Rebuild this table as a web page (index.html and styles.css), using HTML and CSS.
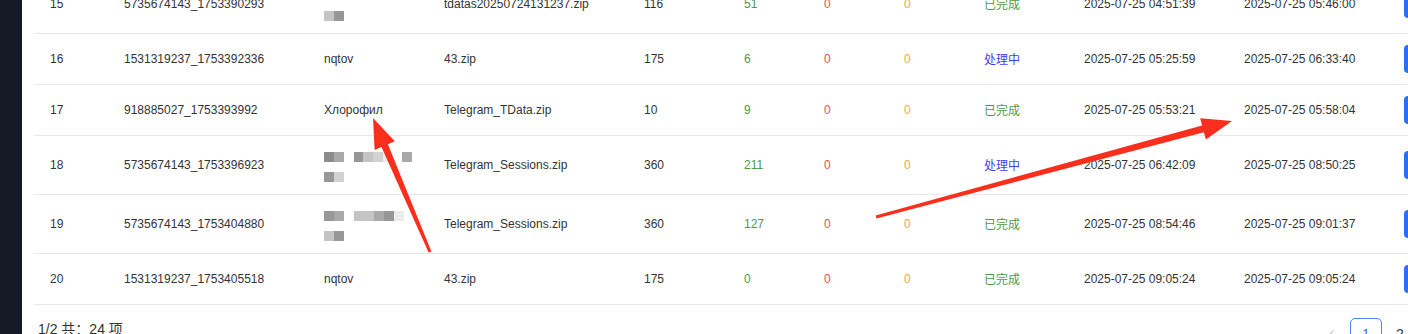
FILE: index.html
```html
<!DOCTYPE html>
<html lang="zh-CN">
<head>
<meta charset="utf-8">
<title>任务列表</title>
<link rel="stylesheet" href="styles.css">
</head>
<body>
<div class="page">
  <aside class="sidebar"></aside>
  <main class="main">
    <table class="grid">
      <colgroup>
        <col class="c-no"><col class="c-id"><col class="c-name"><col class="c-file"><col class="c-total">
        <col class="c-n"><col class="c-n"><col class="c-n"><col class="c-status"><col class="c-time"><col class="c-time"><col class="c-act">
      </colgroup>
      <tbody>
        <tr>
          <td>15</td><td>5735674143_1753390293</td>
          <td><div class="mosaic"><div class="mline"><span class="sq"></span></div><div class="mline"><span class="sq s3"></span><span class="sq s6"></span></div></div></td>
          <td>tdatas20250724131237.zip</td><td>116</td>
          <td class="ok">51</td><td class="bad">0</td><td class="warn">0</td>
          <td class="done">已完成</td><td>2025-07-25 04:51:39</td><td>2025-07-25 05:46:00</td>
          <td class="act"><button class="btn">查看详情</button></td>
        </tr>
        <tr>
          <td>16</td><td>1531319237_1753392336</td><td>nqtov</td><td>43.zip</td><td>175</td>
          <td class="ok">6</td><td class="bad">0</td><td class="warn">0</td>
          <td class="busy">处理中</td><td>2025-07-25 05:25:59</td><td>2025-07-25 06:33:40</td>
          <td class="act"><button class="btn">查看详情</button></td>
        </tr>
        <tr>
          <td>17</td><td>918885027_1753393992</td><td>Хлорофил</td><td>Telegram_TData.zip</td><td>10</td>
          <td class="ok">9</td><td class="bad">0</td><td class="warn">0</td>
          <td class="done">已完成</td><td>2025-07-25 05:53:21</td><td>2025-07-25 05:58:04</td>
          <td class="act"><button class="btn">查看详情</button></td>
        </tr>
        <tr>
          <td>18</td><td>5735674143_1753396923</td>
          <td><div class="mosaic">
            <div class="mline"><span class="sq s7"></span><span class="sq s5"></span><span class="sq s6"></span><span class="sq s3"></span><span class="sq s2"></span><span class="sq s1"></span><span class="sq s0"></span><span class="sq s5"></span></div>
            <div class="mline"><span class="sq s6"></span><span class="sq s2"></span></div>
          </div></td>
          <td>Telegram_Sessions.zip</td><td>360</td>
          <td class="ok">211</td><td class="bad">0</td><td class="warn">0</td>
          <td class="busy">处理中</td><td>2025-07-25 06:42:09</td><td>2025-07-25 08:50:25</td>
          <td class="act"><button class="btn">查看详情</button></td>
        </tr>
        <tr>
          <td>19</td><td>5735674143_1753404880</td>
          <td><div class="mosaic">
            <div class="mline"><span class="sq s6"></span><span class="sq s5"></span><span class="sq s3"></span><span class="sq s3"></span><span class="sq s5"></span><span class="sq s6"></span><span class="sq s1"></span></div>
            <div class="mline"><span class="sq s3"></span><span class="sq s6"></span></div>
          </div></td>
          <td>Telegram_Sessions.zip</td><td>360</td>
          <td class="ok">127</td><td class="bad">0</td><td class="warn">0</td>
          <td class="done">已完成</td><td>2025-07-25 08:54:46</td><td>2025-07-25 09:01:37</td>
          <td class="act"><button class="btn">查看详情</button></td>
        </tr>
        <tr>
          <td>20</td><td>1531319237_1753405518</td><td>nqtov</td><td>43.zip</td><td>175</td>
          <td class="ok">0</td><td class="bad">0</td><td class="warn">0</td>
          <td class="done">已完成</td><td>2025-07-25 09:05:24</td><td>2025-07-25 09:05:24</td>
          <td class="act"><button class="btn">查看详情</button></td>
        </tr>
      </tbody>
    </table>
    <div class="footer">
      <span class="total">1/2 共：24 项</span>
      <div class="pager">
        <span class="pg prev"><svg width="10" height="10" viewBox="0 0 10 10"><path d="M6.5 1.5 3 5l3.5 3.5" fill="none" stroke="#c8cbd2" stroke-width="1.2"/></svg></span>
        <span class="pg active">1</span>
        <span class="pg">2</span>
        <span class="pg next"><svg width="10" height="10" viewBox="0 0 10 10"><path d="M3.5 1.5 7 5 3.5 8.5" fill="none" stroke="#666" stroke-width="1.2"/></svg></span>
      </div>
    </div>
  </main>
  <svg class="marks" width="1408" height="334" viewBox="0 0 1408 334">
    <polygon points="373,118 394.8,141.3 387.9,144.2 431.4,251.4 428.6,252.6 381.5,147 374.6,149.9"/>
    <polygon points="1232,121 1200.2,118.2 1202.1,125.4 875.6,215.6 876.4,218.4 1203.9,132.2 1205.9,139.4"/>
  </svg>
</div>
</body>
</html>
```
FILE: styles.css
```css
* { box-sizing: border-box; }
html, body { margin: 0; padding: 0; background: #fff; }
body {
  width: 1408px;
  height: 334px;
  overflow: hidden;
  font-family: "Liberation Sans", Arial, "Noto Sans CJK SC", sans-serif;
  font-size: 12px;
  color: #333;
}
.page {
  position: relative;
  display: flex;
  height: 334px;
}
.sidebar {
  flex: 0 0 22px;
  background: #151a24;
}
.main {
  flex: 1 1 auto;
  min-width: 0;
  padding-left: 12px;
  overflow: hidden;
}
.grid {
  margin-top: -25px;
  width: 1474px;
  table-layout: fixed;
  border-collapse: collapse;
}
.c-no { width: 74px; }
.c-id { width: 200px; }
.c-name { width: 120px; }
.c-file { width: 200px; }
.c-total { width: 100px; }
.c-n { width: 80px; }
.c-status { width: 100px; }
.c-time { width: 160px; }
.c-act { width: 120px; }
.grid td {
  padding: 9px 16px;
  line-height: 20px;
  vertical-align: middle;
  white-space: nowrap;
  border-bottom: 1px solid #e9e9e9;
}
.grid td.act { padding: 11px 16px; }
.ok { color: #4f9848; }
.bad { color: #f04e4e; }
.warn { color: #f3a745; }
.done { color: #4f9848; font-family: "Noto Sans CJK SC", sans-serif; }
.busy { color: #3d3df2; font-family: "Noto Sans CJK SC", sans-serif; }
.btn {
  display: block;
  height: 28px;
  padding: 0 12px;
  border: 0;
  border-radius: 4px;
  background: #2b6ff2;
  color: #fff;
  font-family: "Noto Sans CJK SC", sans-serif;
  font-size: 12px;
}
.mosaic { display: flex; flex-direction: column; }
.mline {
  display: flex;
  height: 20px;
  padding-top: 7px;
}
.sq {
  width: 10px;
  height: 10px;
  background: transparent;
}
.sq:nth-child(2) { margin-right: 10px; }
.s0 { background: transparent; }
.s1 { background: #ececec; }
.s2 { background: #d2d2d2; }
.s3 { background: #c4c4c4; }
.s5 { background: #a9a9a9; }
.s6 { background: #979797; }
.s7 { background: #8c8c8c; }
.footer {
  width: 1474px;
  display: flex;
  justify-content: space-between;
  align-items: flex-start;
  padding: 13px 58px 0 4px;
}
.total {
  margin-top: 1px;
  font-size: 14px;
  line-height: 20px;
  color: #333;
  font-family: "Liberation Sans", Arial, "Noto Sans CJK SC", sans-serif;
}
.pager {
  display: flex;
  gap: 2px;
}
.pg {
  width: 32px;
  height: 32px;
  display: flex;
  align-items: center;
  justify-content: center;
  font-size: 14px;
  color: #333;
  border: 1px solid transparent;
  border-radius: 5px;
}
.pg.active {
  border-color: #4a84f5;
  color: #3a74ee;
}
.marks {
  position: absolute;
  left: 0;
  top: 0;
  pointer-events: none;
}
.marks polygon { fill: #fa2e1c; }
```
